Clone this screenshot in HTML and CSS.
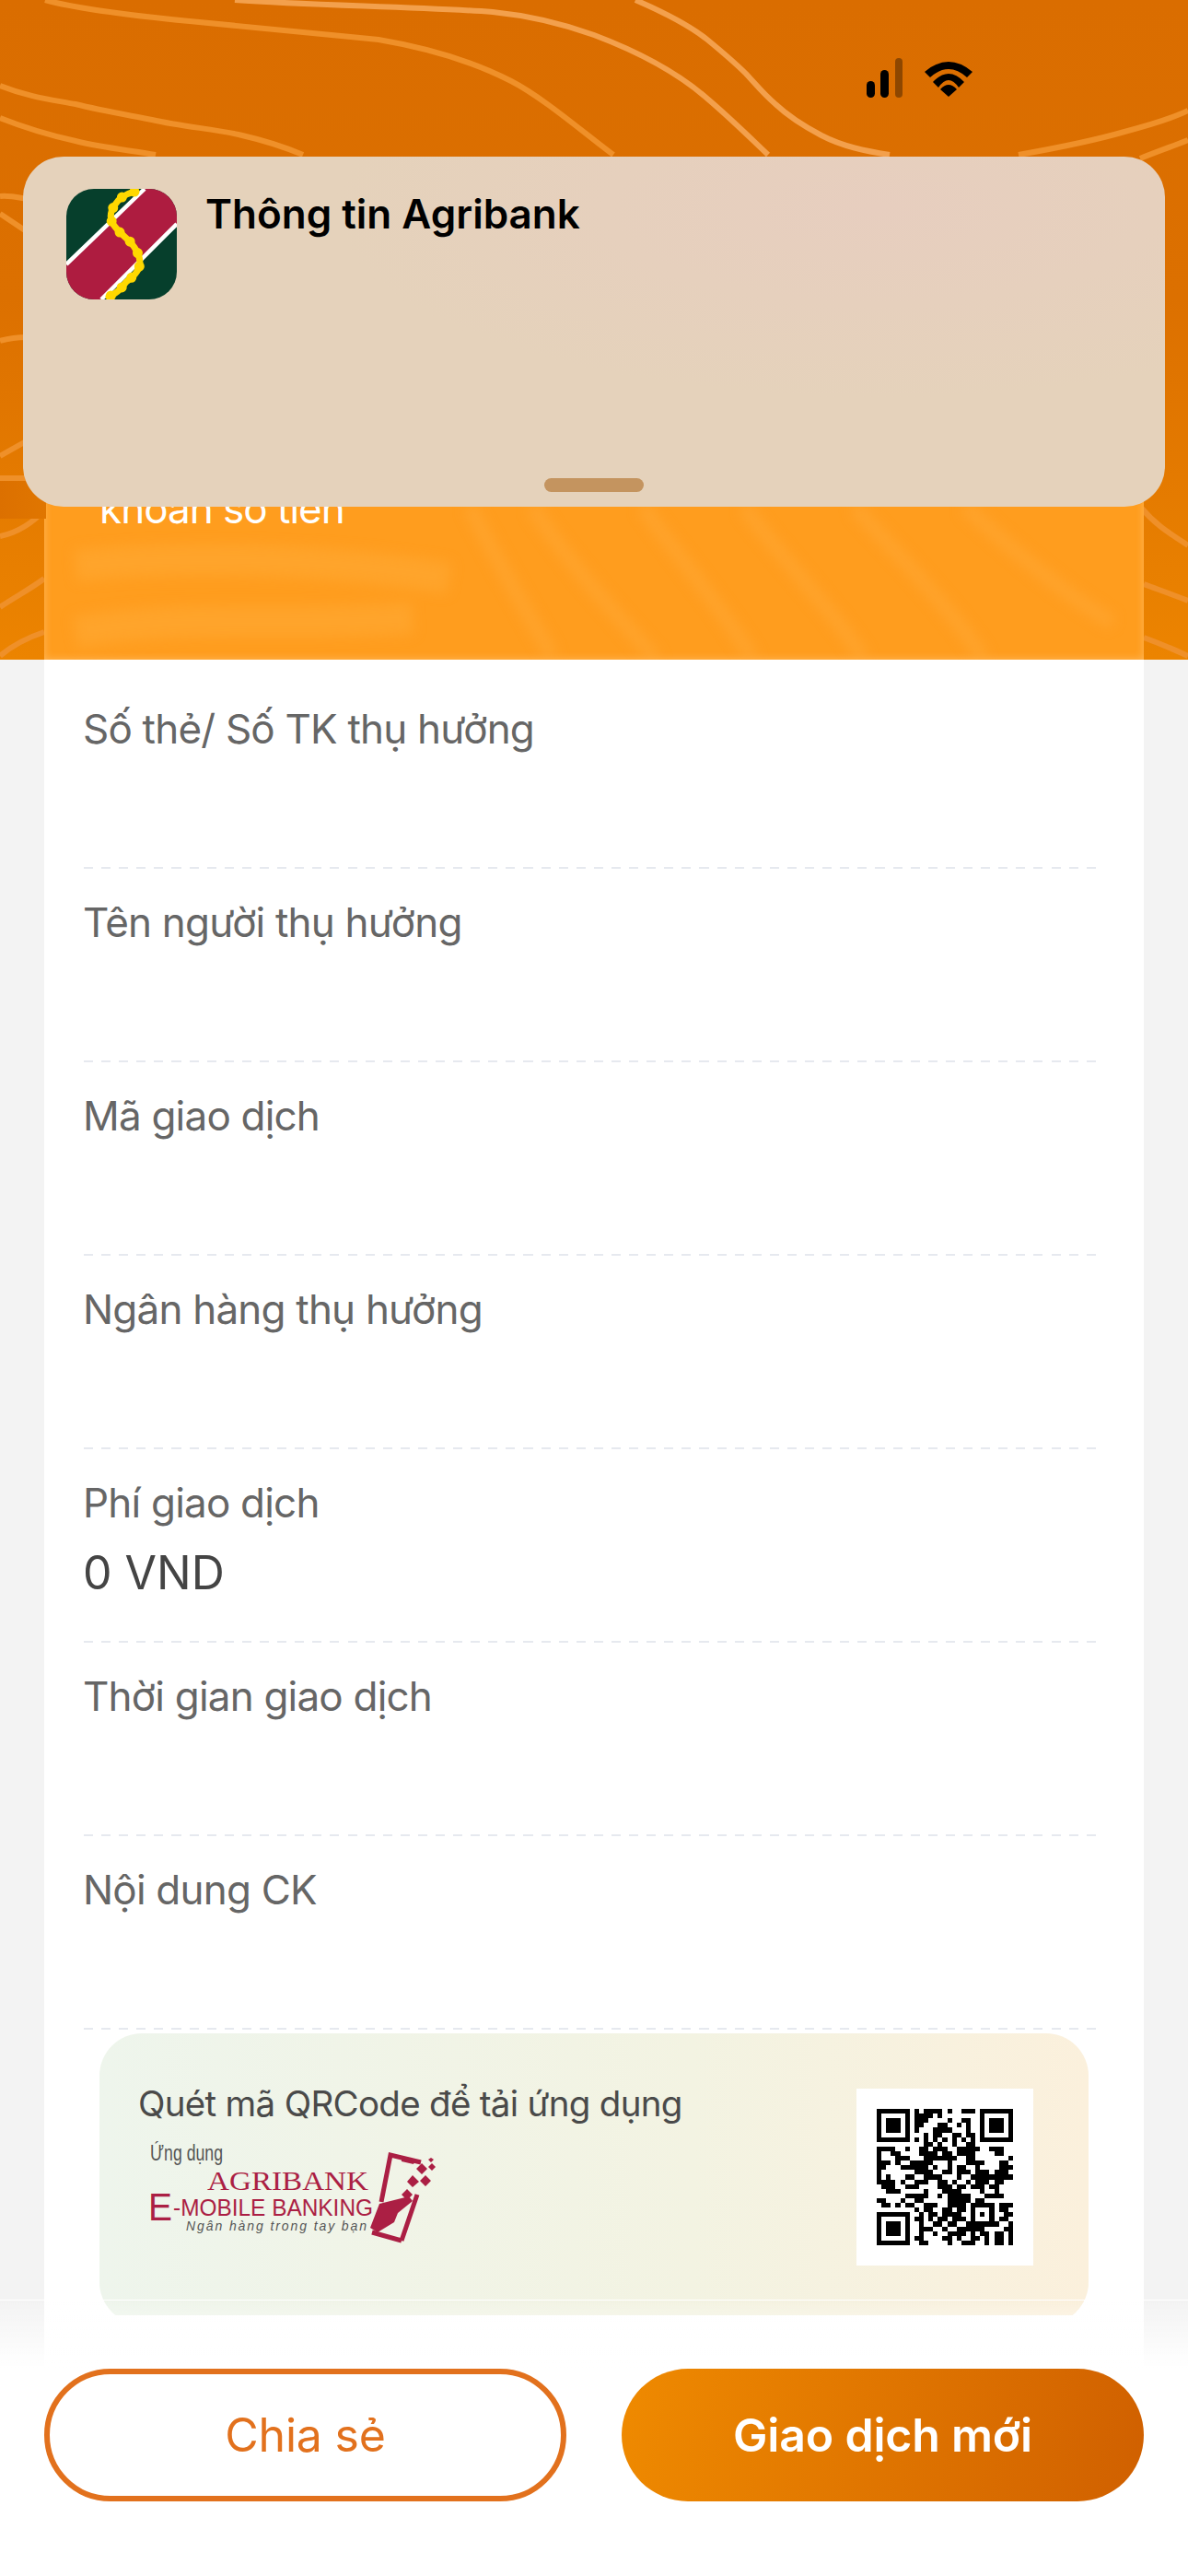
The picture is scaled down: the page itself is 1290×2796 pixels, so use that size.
FILE: index.html
```html
<!DOCTYPE html>
<html lang="vi">
<head>
<meta charset="UTF-8">
<meta name="viewport" content="width=device-width, initial-scale=1.0">
<title>Agribank E-Mobile Banking</title>
<link rel="stylesheet" href="styles.css">
</head>
<body>
<div class="page">

    <div class="hero">
        <!-- contour lines behind everything in the header -->
        <svg class="hero-lines" viewBox="0 0 1290 716" fill="none">
            <path d="M49 0C85 10 145 17 206 23S340 36 411 43C470 53 520 70 555 88C590 106 635 145 666 168"/>
            <path class="bright" d="M255 0C340 6 450 7 535 13C585 18 620 29 645 38C690 55 735 78 768 107C795 130 815 150 834 168"/>
            <path class="bright" d="M690 0C720 13 748 27 768 43C785 57 798 68 810 80C822 93 830 103 842 113C858 128 873 137 892 147C915 159 940 164 966 168"/>
            <path d="M1290 120C1270 130 1240 138 1221 143C1190 152 1140 162 1106 168"/>
            <path d="M1290 152C1270 160 1255 165 1238 172"/>
            <path d="M0 93C30 105 55 108 82 113C110 120 140 125 165 130C200 138 235 140 263 147C285 152 310 160 329 168"/>
            <path d="M0 128C30 140 55 147 82 153C110 160 140 163 169 168"/>
            <path d="M0 213C10 212 18 214 30 216"/>
            <path d="M0 232L30 252"/>
            <path d="M0 370C10 367 18 366 30 366"/>
            <path d="M0 495L30 478"/>
            <path d="M0 519H30"/>
            <path d="M0 582C20 578 38 565 50 552"/>
            <path d="M0 659C16 648 32 640 48 628"/>
            <path d="M0 712C14 700 30 692 48 686"/>
            <path d="M1240 552C1255 570 1272 580 1290 592"/>
            <path d="M1242 634C1258 640 1275 646 1290 652"/>
            <path d="M1242 692C1258 698 1275 705 1290 712"/>
        </svg>
        <div class="status-bar">
            <svg class="signal" viewBox="0 0 39 43">
                <rect x="0" y="25" width="9" height="18" rx="4.5"/>
                <rect x="15" y="13" width="9" height="30" rx="4.5"/>
                <rect class="off" x="31" y="0" width="8" height="43" rx="4"/>
            </svg>
            <svg class="wifi" viewBox="0 0 52 38">
                <path d="M0 11Q26 -11 52 11L46 17Q26 -1 6 17Z"/>
                <path d="M9 22Q26 4 43 22L37 28Q26 12 15 28Z"/>
                <path d="M17 30Q26 20 35 30L26 38Z"/>
            </svg>
        </div>
        <div class="summary">
            <svg class="summary-lines" viewBox="0 0 1194 200" fill="none">
                <path class="wide" d="M34 98C130 88 300 88 440 112"/>
                <path class="wide" d="M34 170C150 150 260 165 400 155"/>
                <path d="M462 34C490 90 525 150 552 197"/>
                <path d="M530 34C565 90 620 150 665 200"/>
                <path d="M650 34C690 90 740 150 770 200"/>
                <path d="M760 34C800 90 860 150 890 200"/>
                <path d="M880 34C930 90 990 150 1020 200"/>
                <path d="M1000 34C1050 80 1110 130 1160 160"/>
            </svg>
            <p class="summary-text">khoản số tiền</p>
        </div>
        <div class="hero-notch"></div>
    </div>

    <div class="sheet">
        <div class="row"><div class="row-label">Số thẻ/ Số TK thụ hưởng</div></div>
        <div class="row"><div class="row-label">Tên người thụ hưởng</div></div>
        <div class="row"><div class="row-label">Mã giao dịch</div></div>
        <div class="row"><div class="row-label">Ngân hàng thụ hưởng</div></div>
        <div class="row"><div class="row-label">Phí giao dịch</div><div class="row-value">0 VND</div></div>
        <div class="row"><div class="row-label">Thời gian giao dịch</div></div>
        <div class="row"><div class="row-label">Nội dung CK</div></div>

        <div class="promo-clip">
            <div class="promo">
                <div class="promo-left">
                    <div class="promo-title">Quét mã QRCode để tải ứng dụng</div>
                    <svg class="promo-logo" viewBox="0 0 350 130">
                        <text class="logo-small" x="23" y="33" textLength="79" lengthAdjust="spacingAndGlyphs">Ứng dụng</text>
                        <text class="logo-bank" x="85" y="65" textLength="175" lengthAdjust="spacingAndGlyphs">AGRIBANK</text>
                        <text class="logo-e" x="21" y="98" textLength="26" lengthAdjust="spacingAndGlyphs">E</text>
                        <text class="logo-mobile" x="48" y="93" textLength="217" lengthAdjust="spacingAndGlyphs">-MOBILE BANKING</text>
                        <text class="logo-slogan" x="62" y="109" textLength="196">Ngân hàng trong tay bạn</text>
                        <!-- phone held in a hand -->
                        <path class="logo-phone" d="M274 78L284 27L317 35M296 120L264 111M296 120L313 70"/>
                        <path class="logo-fill" d="M296 31L310 35L309 37L296 34ZM272 80L304 72L308 77L292 90L288 100L270 111L262 106Z"/>
                        <circle class="logo-hole" cx="285" cy="108" r="4"/>
                        <path class="logo-fill" d="M318 36L324 42L318 48L312 42ZM329 36L333 40L329 44L325 40ZM328 30L331 32L328 35L325 32ZM308 49L315 56L308 62L302 56ZM322 49L328 55L322 61L316 55ZM302 64L308 70L302 76L296 70Z"/>
                    </svg>
                </div>
                <div class="qr-box"><svg id="qr" class="qr" viewBox="0 0 29 29" shape-rendering="crispEdges"></svg></div>
            </div>
        </div>
    </div>

    <!-- notification over the header -->
    <div class="banner">
        <svg class="banner-icon" viewBox="0 0 120 120">
            <rect width="120" height="120" rx="30" fill="#063f2c"/>
            <clipPath id="iconClip"><rect width="120" height="120" rx="30"/></clipPath>
            <g clip-path="url(#iconClip)">
                <path d="M85 0H120V38L38 120H0V82Z" fill="#ae1c40"/>
                <path d="M0 82L85 0M120 38L38 120" stroke="#fff" stroke-width="4.5"/>
                <path d="M74 3C66 5 58 9 53 17C48 24 47 31 50 37C54 44 62 51 69 57C75 64 80 72 80 80C80 88 72 96 65 101C60 108 54 114 46 117" fill="none" stroke="#ffd800" stroke-width="7" stroke-linecap="round"/>
                <path d="M74 3C66 5 58 9 53 17C48 24 47 31 50 37C54 44 62 51 69 57C75 64 80 72 80 80C80 88 72 96 65 101C60 108 54 114 46 117" fill="none" stroke="#ffd800" stroke-width="11" stroke-linecap="round" stroke-dasharray="0 15"/>
            </g>
        </svg>
        <div class="banner-title">Thông tin Agribank</div>
        <div class="banner-handle"></div>
    </div>

    <div class="footer">
        <div class="footer-buttons">
            <button class="btn btn-outline">Chia sẻ</button>
            <button class="btn btn-solid">Giao dịch mới</button>
        </div>
    </div>

</div>
<script src="qr.js"></script>
</body>
</html>
```

FILE: styles.css
```css
html, body {
    margin: 0;
    padding: 0;
}
body {
    font-family: Inter, "Noto Sans", sans-serif;
    background-color: #f3f3f3;
}
.page {
    position: relative;
    width: 1290px;
    height: 2796px;
    overflow: hidden;
    background-color: #f3f3f3;
}

/* header */
.hero {
    position: relative;
    height: 716px;
    background: linear-gradient(180deg, #da6d00 0%, #dc7000 45%, #ec8400 100%);
    display: flex;
    flex-direction: column;
}
.hero-lines {
    position: absolute;
    left: 0;
    top: 0;
    width: 1290px;
    height: 716px;
}
.hero-lines path {
    stroke: #ef9029;
    stroke-width: 6;
}
.hero-lines path.bright {
    stroke: #f3a04c;
}
.status-bar {
    position: relative;
    display: flex;
    justify-content: flex-end;
    align-items: flex-start;
    gap: 24px;
    padding: 63px 234px 0 0;
    height: 53px;
}
.signal {
    width: 39px;
    height: 43px;
}
.signal .off {
    opacity: 0.35;
}
.wifi {
    width: 52px;
    height: 38px;
    margin-top: 4px;
}
.summary {
    position: relative;
    margin: auto 48px 0;
    height: 200px;
    background-color: #ff9d1e;
    overflow: hidden;
    box-shadow: inset 0 0 8px rgba(255, 220, 170, 0.45);
}
.summary-lines {
    position: absolute;
    left: 0;
    top: 0;
    width: 100%;
    height: 100%;
    filter: blur(7px);
}
.summary-lines path {
    stroke: #ffb044;
    stroke-width: 14;
    opacity: 0.4;
}
.summary-lines path.wide {
    stroke: #ffae3e;
    stroke-width: 34;
    opacity: 0.4;
}
.summary-text {
    position: relative;
    margin: 0 0 0 -1px;
    padding: 10px 0 0 61px;
    color: #fff;
    font-size: 44px;
    letter-spacing: -1px;
    line-height: 52px;
}
.hero-notch {
    position: absolute;
    left: 0;
    top: 522px;
    width: 50px;
    height: 41px;
    background: linear-gradient(90deg, #dc7000, #e07600);
}

/* white receipt */
.sheet {
    position: relative;
    margin: 0 48px;
    height: 1844px;
    padding: 17px 50px 0 43px;
    background-color: #fff;
}
.sheet::after {
    content: "";
    position: absolute;
    left: 20px;
    right: 20px;
    bottom: 0;
    height: 12px;
    background: radial-gradient(circle at 50% 100%, #f8f8f8 10px, transparent 11px) 0 0 / 30px 12px repeat-x;
}
.row {
    box-sizing: border-box;
    height: 210px;
    padding-top: 28px;
    background: repeating-linear-gradient(90deg, #e6e9ef 0 10px, transparent 10px 19.1px) left bottom / 100% 2px no-repeat;
}
.row-label {
    margin-left: -1px;
    color: #666;
    font-size: 44px;
    letter-spacing: -0.8px;
    line-height: 60px;
}
.row-value {
    margin: 14px 0 0 -1px;
    color: #444;
    font-size: 50px;
    line-height: 64px;
}
.promo-clip {
    height: 306px;
    margin: 4px 10px 0 17px;
    overflow: hidden;
}
.promo {
    box-sizing: border-box;
    height: 316px;
    padding: 51px 60px 0 42px;
    border-radius: 46px;
    display: flex;
    justify-content: space-between;
    align-items: flex-start;
    background: linear-gradient(90deg, #eef5ec 0%, #f3f3e2 60%, #fbf0dc 100%);
}
.promo-title {
    color: #4a4a4a;
    font-size: 38.5px;
    letter-spacing: -0.7px;
    line-height: 50px;
}
.promo-logo {
    display: block;
    width: 350px;
    height: 130px;
    margin: 4px 0 0 -10px;
}
.promo-logo text {
    font-family: "Liberation Sans", sans-serif;
}
.promo-logo .logo-small {
    fill: #555;
    font-size: 23px;
}
.promo-logo .logo-bank {
    fill: #ab1f44;
    font-family: "Liberation Serif", serif;
    font-size: 30px;
}
.promo-logo .logo-e {
    fill: #ab1f44;
    font-size: 42px;
}
.promo-logo .logo-mobile {
    fill: #ab1f44;
    font-size: 26px;
}
.promo-logo .logo-slogan {
    fill: #555;
    font-size: 14px;
    font-style: italic;
}
.logo-phone {
    fill: none;
    stroke: #ab1f44;
    stroke-width: 5;
}
.logo-fill {
    fill: #ab1f44;
}
.logo-hole {
    fill: #f0f4ea;
}
.qr-box {
    box-sizing: border-box;
    width: 192px;
    height: 192px;
    margin-top: 9px;
    padding: 22px;
    background-color: #fff;
}
.qr {
    display: block;
    width: 148px;
    height: 148px;
}

/* notification */
.banner {
    position: absolute;
    left: 25px;
    top: 170px;
    box-sizing: border-box;
    width: 1240px;
    height: 380px;
    border-radius: 44px;
    padding: 35px 47px;
    display: flex;
    align-items: flex-start;
    gap: 31px;
    background: radial-gradient(ellipse at 75% 15%, #e7cebf 0%, #e5d2bb 45%) #e5d2bb;
}
.banner-icon {
    width: 120px;
    height: 120px;
    flex: none;
}
.banner-title {
    color: #000;
    font-size: 44px;
    font-weight: 600;
    line-height: 52px;
    margin-top: 1px;
}
.banner-handle {
    position: absolute;
    left: 566px;
    top: 349px;
    width: 108px;
    height: 15px;
    border-radius: 8px;
    background-color: #c4945f;
}

/* bottom buttons */
.footer {
    position: absolute;
    left: 0;
    right: 0;
    top: 2496px;
    bottom: 0;
    border-top: 1px solid rgba(255, 255, 255, 0.6);
    background: linear-gradient(180deg, rgba(255, 255, 255, 0) 0, #fff 74px);
}
.footer-buttons {
    display: flex;
    justify-content: space-between;
    padding: 74px 48px 0;
}
.btn {
    box-sizing: border-box;
    width: 567px;
    height: 144px;
    border-radius: 72px;
    font-family: Inter, "Noto Sans", sans-serif;
    font-size: 50px;
    letter-spacing: -0.2px;
}
.btn-outline {
    border: 6px solid #e2711d;
    background-color: #fff;
    color: #e2711d;
}
.btn-solid {
    border: none;
    background: linear-gradient(100deg, #ef8a00, #d06000);
    color: #fff;
    font-weight: 600;
}
```

FILE: qr.js
```js
// draws the app download code, one string per row
var rows = [
    "11111110101111010011101111111",
    "10000010111101000000001000001",
    "10111010111000010011001011101",
    "10111010110001100101001011101",
    "10111010100011110001001011101",
    "10000010001011001101101000001",
    "11111110101010101010101111111",
    "00000000001101001001100000000",
    "11110010011011100111110011100",
    "10011000011110110111100001100",
    "10001110001111111001100000001",
    "11101001111100010001111000110",
    "11000111111010010110010000111",
    "10000000111100110111011101110",
    "10100011001111000100111111111",
    "11110100111001101001011101100",
    "01110011100001110110111011000",
    "00111000001000111100001001000",
    "00000011111001011111000111100",
    "11000100110000011111011000000",
    "01101011001110011110111110111",
    "00000000101100110110100010110",
    "11111110010110111100101010011",
    "10000010110101101110100010110",
    "10111010010011011001111111001",
    "10111010011100100111111000011",
    "10111010010010011110101101101",
    "10000010110000110100110101101",
    "11111110011000010011100101101"
];

var d = "";
rows.forEach(function(row, y) {
    for (var x = 0; x < row.length; x++) {
        if (row[x] === "1") {
            d += "M" + x + " " + y + "h1v1h-1z";
        }
    }
});

var path = document.createElementNS("http://www.w3.org/2000/svg", "path");
path.setAttribute("d", d);
document.getElementById("qr").appendChild(path);
```
